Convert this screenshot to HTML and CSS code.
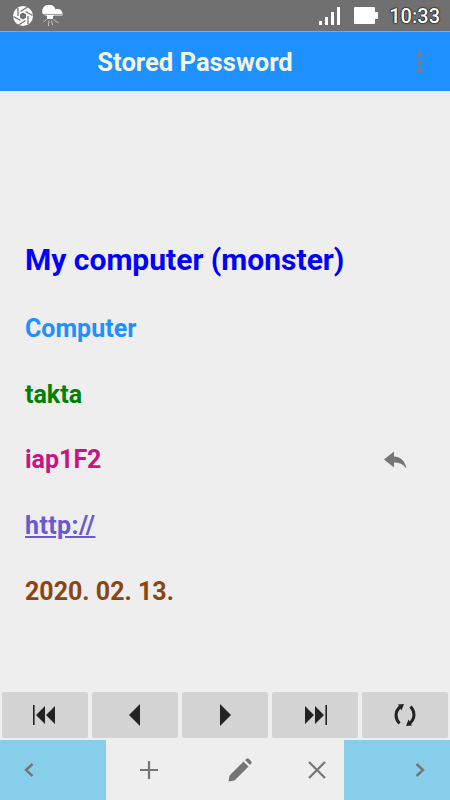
FILE: index.html
```html
<!DOCTYPE html>
<html lang="en">
<head>
<meta charset="utf-8">
<title>Stored Password</title>
<link rel="stylesheet" href="styles.css">
</head>
<body>
<div class="app">
  <div class="status">
    <div class="status-left">
      <svg class="ico-shutter" width="20" height="20" viewBox="0 0 20 20"><circle cx="10" cy="10" r="10" fill="#fff"/><g stroke="#707070" stroke-width="1.300" fill="none"><path d="M7.500 5.500 L14.500 1"/><path d="M12.500 5.500 L19.500 9.500"/><path d="M15 10 L15 18"/><path d="M12.500 14.500 L5.500 19"/><path d="M7.500 14.500 L0.500 10.500"/><path d="M5 10 L5 2"/></g><path d="M10 6.500 L13 8.250 V11.750 L10 13.500 L7 11.750 V8.250 Z" fill="#707070"/></svg>
      <svg class="ico-weather" width="21" height="23" viewBox="0 0 21 23"><path d="M1 9.500 A6.800 6.800 0 1 1 13 9.500 L11 11 V14 H5 V11 Z" fill="#fff"/><path d="M10.500 10 C11 6 13.500 3.500 16 4 C19.500 4.500 21 7.500 20.500 10.500 H12 Z" fill="#fff"/><path d="M1 9.400 H20.500" stroke="#707070" stroke-width=".7"/><path d="M7 15.500 L6.500 21 M9.500 15.500 L10.500 20 M11.500 14.500 L16.500 18 M4.500 14.500 L1.500 17" stroke="#cfcfcf" stroke-width=".9"/></svg>
    </div>
    <div class="status-right">
      <svg width="21" height="18" viewBox="0 0 21 18"><rect x="0" y="14" width="3" height="4" fill="#fff"/><rect x="6" y="10" width="3" height="8" fill="#fff"/><rect x="12" y="5" width="3" height="13" fill="#fff"/><rect x="18" y="0" width="3" height="18" fill="#fff"/></svg>
      <svg class="ico-batt" width="25" height="17" viewBox="0 0 25 17"><rect x="0" y="0" width="21" height="17" rx="1" fill="#fff"/><rect x="21" y="5" width="3" height="7" fill="#fff"/></svg>
      <span class="clock">10:33</span>
    </div>
  </div>
  <header class="appbar">
    <h1 class="appbar-title">Stored Password</h1>
    <div class="kebab"><i></i><i></i><i></i></div>
  </header>
  <main class="content">
    <div class="row row-title">My computer (monster)</div>
    <div class="row row-cat">Computer</div>
    <div class="row row-user">takta</div>
    <div class="row row-pass"><span>iap1F2</span>
      <svg class="reply" width="24" height="20" viewBox="0 0 24 20"><path d="M1 9.500 L11 1.500 V6.500 C18 7 22 11 23.500 18.500 C20 14 16 12.500 11 12.500 V17.500 Z" fill="#757575"/></svg>
    </div>
    <div class="row row-url"><a href="#">http://</a></div>
    <div class="row row-date">2020. 02. 13.</div>
  </main>
  <div class="nav">
    <button class="nav-btn"><svg width="24" height="20" viewBox="0 0 24 20"><rect x="0" y="0" width="1.600" height="20" fill="#222"/><path d="M3 10 L12 1 V19 Z M13 10 L22 1 V19 Z" fill="#222"/></svg></button>
    <button class="nav-btn"><svg width="12" height="22" viewBox="0 0 12 22"><path d="M0 11 L11 0 V22 Z" fill="#222"/></svg></button>
    <button class="nav-btn"><svg width="12" height="22" viewBox="0 0 12 22"><path d="M12 11 L1 0 V22 Z" fill="#222"/></svg></button>
    <button class="nav-btn"><svg width="24" height="20" viewBox="0 0 24 20"><rect x="22.400" y="0" width="1.600" height="20" fill="#222"/><path d="M21 10 L12 1 V19 Z M11 10 L2 1 V19 Z" fill="#222"/></svg></button>
    <button class="nav-btn"><svg width="22" height="22" viewBox="0 0 22 22"><g fill="none" stroke="#222" stroke-width="3"><path d="M6 3 C0.800 7.500 0.800 14.500 5.500 19.500"/><path d="M16 19 C21.200 14.500 21.200 7.500 16.500 2.500"/></g><path d="M10 0 L4 0.500 L7.500 6.500 Z M12 22 L18 21.500 L14.500 15.500 Z" fill="#222"/></svg></button>
  </div>
  <footer class="toolbar">
    <div class="side side-left"><svg width="10" height="14" viewBox="0 0 10 14"><path d="M8.500 1 L2 7 L8.500 13" fill="none" stroke="#757575" stroke-width="2.400"/></svg></div>
    <div class="tools">
      <svg class="tool-add" width="18" height="18" viewBox="0 0 18 18"><path d="M9 0 V18 M0 9 H18" stroke="#757575" stroke-width="2.200"/></svg>
      <svg class="tool-edit" width="24" height="24" viewBox="0 0 24 24"><path d="M0.500 23.500 L1.500 17.500 L15.500 3.500 L20.500 8.500 L6.500 22.500 Z M17 2 L19 0.500 Q20 0 21 1 L23 3 Q24 4 23.500 5 L22 7 Z" fill="#757575"/></svg>
      <svg class="tool-del" width="18" height="18" viewBox="0 0 18 18"><path d="M1 1 L17 17 M17 1 L1 17" stroke="#757575" stroke-width="2.200"/></svg>
    </div>
    <div class="side side-right"><svg width="10" height="14" viewBox="0 0 10 14"><path d="M1.500 1 L8 7 L1.500 13" fill="none" stroke="#757575" stroke-width="2.400"/></svg></div>
  </footer>
</div>
</body>
</html>
```
FILE: styles.css
```css
* { box-sizing: border-box; }
html, body { margin: 0; padding: 0; }
body { font-family: Roboto, sans-serif; background: #eeeeee; }
.app { width: 450px; height: 800px; display: flex; flex-direction: column; overflow: hidden; }

.status { height: 32px; flex: none; background: #707070; border-bottom: 1px solid #5fb0ff; display: flex; justify-content: space-between; align-items: center; padding: 0 10px 0 13px; }
.status-left { display: flex; align-items: center; gap: 9px; }
.ico-weather { margin-top: 2px; }
.status-right { display: flex; align-items: center; }
.ico-batt { margin-left: 14px; }
.clock { margin-left: 10px; font-size: 20px; font-weight: 500; color: #fff; text-shadow: 0 0 2px #000, 0 0 1px #000, 0 0 1px #000; }

.appbar { height: 59px; flex: none; background: #1e90ff; position: relative; display: flex; justify-content: center; align-items: center; padding-right: 60px; }
.appbar-title { margin: 0; font-size: 25.600px; font-weight: 700; color: #f5f5dc; }
.kebab { position: absolute; right: 28px; top: 20px; display: flex; flex-direction: column; gap: 2px; }
.kebab i { display: block; width: 5.500px; height: 5.500px; border-radius: 50%; background: #7d7d7d; }

.content { flex: 1; padding: 131px 25px 0; font-weight: 700; }
.row { display: flex; align-items: center; justify-content: space-between; font-size: 25px; height: 65.600px; }
.row-title { font-size: 30px; color: #0000ff; height: 74px; }
.row-cat { color: #1e90ff; }
.row-user { color: #008000; }
.row-pass { color: #c71585; }
.reply { margin-right: 18px; }
.row-url a { color: #6a5acd; letter-spacing: .4px; }
.row-date { color: #8b4513; }

.nav { flex: none; display: flex; gap: 4px; padding: 0 2px; height: 46px; margin-bottom: 2px; }
.nav-btn { flex: 1; border: 0; padding: 0; background: #d3d3d3; border-radius: 2px; display: flex; align-items: center; justify-content: center; }

.toolbar { flex: none; height: 60px; display: flex; }
.side { width: 106px; background: #87ceeb; display: flex; align-items: center; }
.side-left { padding-left: 24px; }
.side-right { justify-content: flex-end; padding-right: 25px; }
.tools { flex: 1; display: flex; align-items: center; padding-left: 34px; }
.tool-edit { margin-left: 70px; }
.tool-del { margin-left: 56px; }
```
